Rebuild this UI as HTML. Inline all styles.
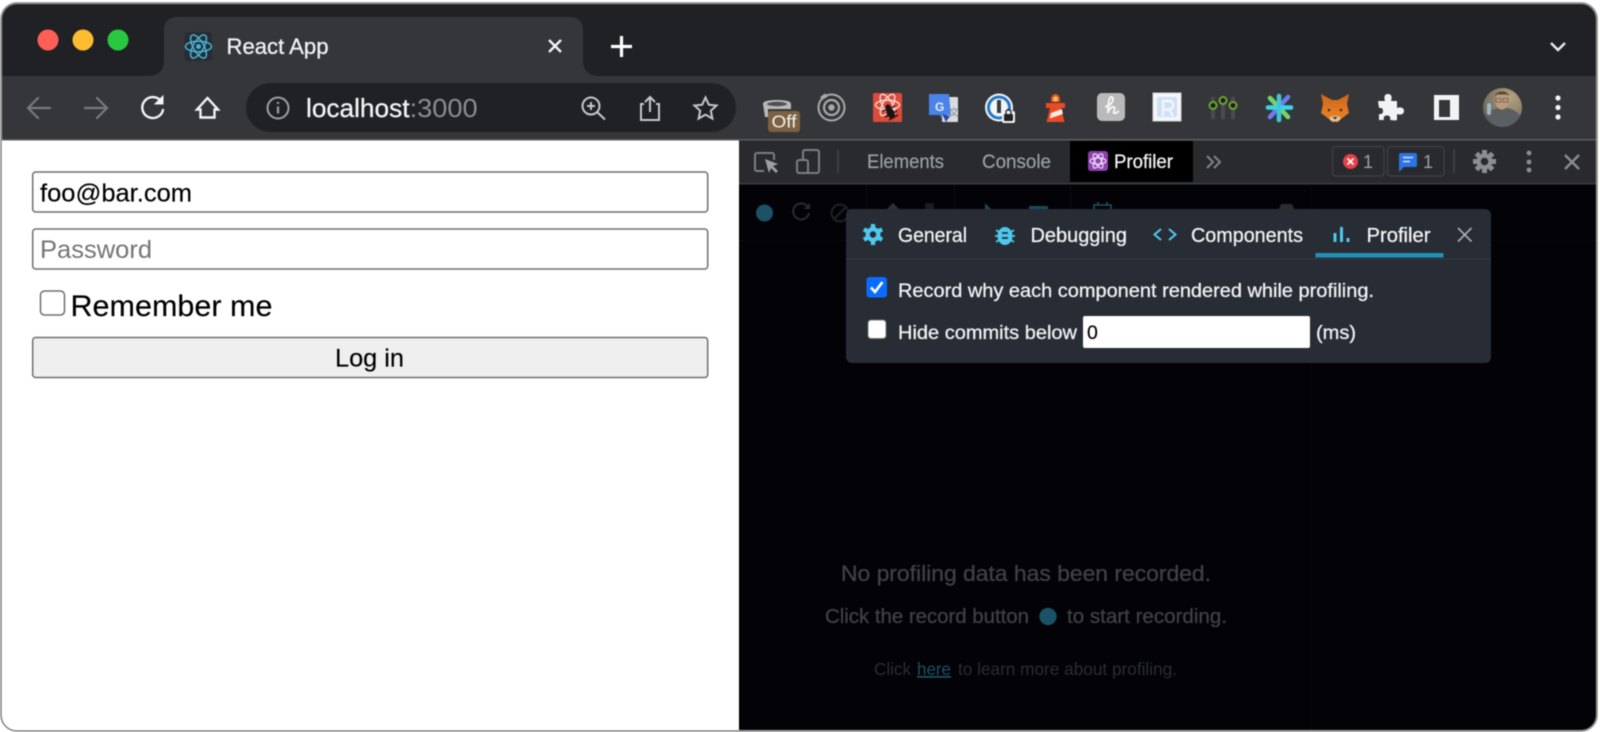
<!DOCTYPE html>
<html lang="en"><head><meta charset="utf-8"><title>React App</title>
<style>
html,body{margin:0;padding:0;background:#fff;width:1600px;height:732px;overflow:hidden}
svg{display:block;position:absolute;left:0;top:0;filter:blur(.4px)}
text{font-family:"Liberation Sans",sans-serif}
.w{stroke:#f0f1f3;stroke-width:.3px}
.k{stroke:#000;stroke-width:.15px}
.g{stroke:#9aa0a6;stroke-width:.2px}
.d{stroke:#404144;stroke-width:.3px}
</style></head><body>
<svg width="1600" height="732" viewBox="0 0 1600 732" xmlns="http://www.w3.org/2000/svg">
<defs>
<clipPath id="win"><rect x="1" y="3" width="1596" height="728" rx="16"/></clipPath>
<radialGradient id="av" cx="70%" cy="25%" r="75%"><stop offset="0" stop-color="#b5a27f"/><stop offset="1" stop-color="#6e6a5c"/></radialGradient>
<linearGradient id="fox" x1="0" y1="0" x2="0" y2="1"><stop offset="0" stop-color="#c9661f"/><stop offset="1" stop-color="#f5851f"/></linearGradient>
</defs>
<rect width="1600" height="732" fill="#fff"/>
<g clip-path="url(#win)">
<rect x="0" y="0" width="1600" height="76" fill="#202124"/>
<rect x="0" y="76" width="1600" height="64" fill="#35363a"/>
<path d="M148 76q16 0 16-16V31q0-14 14-14h391q14 0 14 14v29q0 16 16 16z" fill="#35363a"/>
<circle cx="48" cy="40" r="10.500" fill="#ff5f57"/><circle cx="83" cy="40" r="10.500" fill="#febc2e"/><circle cx="118" cy="40" r="10.500" fill="#28c840"/>
<rect x="184.500" y="32" width="27.500" height="29" rx="3" fill="#282c34"/>
<g fill="none" stroke="#45b5d6" stroke-width="1.500" transform="translate(198.500 46.500)"><ellipse rx="13" ry="5.200"/><ellipse rx="13" ry="5.200" transform="rotate(60)"/><ellipse rx="13" ry="5.200" transform="rotate(120)"/></g><circle cx="198.500" cy="46.500" r="2.500" fill="#45b5d6"/>
<text class="w" x="226.500" y="54" font-size="22" fill="#f0f1f3" textLength="102" lengthAdjust="spacingAndGlyphs">React App</text>
<path d="M549 40l12 12M561 40l-12 12" stroke="#f1f3f4" stroke-width="2.400" fill="none"/>
<path d="M621.500 36v21M611 46.500h21" stroke="#fff" stroke-width="3.200" fill="none"/>
<path d="M1551 43l7 7 7-7" stroke="#e8eaed" stroke-width="2.400" fill="none"/>

<g fill="none" stroke-linecap="round">
<path d="M50 108H29M38 98l-10 10 10 10" stroke="#77797d" stroke-width="2.200"/>
<path d="M85 108h21M97 98l10 10-10 10" stroke="#77797d" stroke-width="2.200"/>
<path d="M161 101a10.500 10.500 0 1 0 2 9" stroke="#f1f3f4" stroke-width="2.400"/>
<path d="M163 96v8h-8z" fill="#f1f3f4" stroke="#f1f3f4" stroke-width="1"/>
</g>
<path d="M197 109.500l10.500-11.500 10.500 11.500h-3.500v8h-14v-8z" stroke="#f1f3f4" stroke-width="2.400" fill="none" stroke-linejoin="miter"/>
<rect x="246" y="83" width="490" height="49" rx="24.500" fill="#202124"/>
<circle cx="278" cy="108" r="10.500" fill="none" stroke="#9aa0a6" stroke-width="2"/>
<path d="M278 106.500v7M278 102v2" stroke="#9aa0a6" stroke-width="2.200"/>
<text class="w" x="306" y="117" font-size="26" fill="#f1f3f4" textLength="103.500" lengthAdjust="spacingAndGlyphs">localhost</text>
<text x="409.600" y="117" font-size="26" fill="#8a8d91" textLength="68" lengthAdjust="spacingAndGlyphs">:3000</text>
<g fill="none" stroke="#c4c7cb" stroke-width="2">
<circle cx="591" cy="106" r="8.500"/><path d="M597 112l8 7.500M591 102v8M587 106h8"/>
<path d="M644 104h-3v16h18v-16h-3M650 112V98M645 102l5-5 5 5" stroke-width="2"/>
<path d="M705.500 97.500l3.300 7.200 7.700.8-5.700 5.300 1.600 7.700-6.900-3.900-6.900 3.900 1.600-7.700-5.700-5.300 7.700-.8z"/>
</g>
<!-- ext: Off -->
<path d="M763 104c0-3 6-4 14-4s14 1 14 4v5h-23v8h-3z" fill="#b9b9b9"/>
<ellipse cx="777" cy="104" rx="10" ry="2.200" fill="#4f5053"/>
<rect x="768" y="111" width="32" height="21" rx="3" fill="#7c6242"/>
<text x="771.500" y="127.500" font-size="17.500" fill="#f1f1f1" textLength="25" lengthAdjust="spacingAndGlyphs">Off</text>
<!-- target -->
<g fill="none" stroke="#a9a9a9"><circle cx="831.500" cy="107.500" r="13" stroke-width="2"/><circle cx="831.500" cy="107.500" r="7.500" stroke-width="2.200"/></g>
<circle cx="831.500" cy="107.500" r="3.200" fill="#a9a9a9"/>
<path d="M820 97l5-3.500 3 3-5 3z" fill="#a9a9a9"/>
<!-- react bug -->
<rect x="873" y="93" width="29" height="29" rx="1.500" fill="#dc4b3b"/>
<g fill="none" stroke="#f6e0da" stroke-width="1.300" transform="translate(887.500 105)"><ellipse rx="12" ry="4.800"/><ellipse rx="12" ry="4.800" transform="rotate(60)"/><ellipse rx="12" ry="4.800" transform="rotate(120)"/></g>
<circle cx="888" cy="107" r="2.600" fill="#1c1210"/>
<ellipse cx="890.500" cy="113" rx="3.800" ry="6" transform="rotate(-28 890.500 113)" fill="#1c1210"/>
<path d="M883 111l12-5M885 117l12-6M889 120l9-5" stroke="#1c1210" stroke-width="1.300"/>
<!-- translate -->
<rect x="942" y="97" width="16" height="25" rx="1" fill="#d9dcdd"/>
<path d="M929 94h20l2 21h-9l-1 3-1-3h-11z" fill="#4a84ea"/>
<path d="M942 114l4 8 4-6z" fill="#2f4aa6"/>
<text x="935" y="111" font-size="12" font-weight="bold" fill="#e7eefb">G</text>
<text x="949" y="116" font-size="10" fill="#7b8d8f" font-family="Noto Sans CJK SC">文</text>
<!-- 1password -->
<circle cx="999" cy="107.500" r="14" fill="#f3f5f7"/><circle cx="999" cy="107.500" r="10.500" fill="none" stroke="#2478c9" stroke-width="3"/>
<rect x="997" y="100" width="4" height="13" fill="#3a3a3a"/>
<rect x="1002" y="111" width="13" height="12" rx="2" fill="#f2f2f2"/><rect x="1004" y="114" width="9" height="7" rx="1" fill="#222"/><path d="M1006 114v-2a2.500 2.500 0 0 1 5 0v2" stroke="#222" stroke-width="1.300" fill="none"/>
<!-- lighthouse -->
<path d="M1051 102v-3a4.500 5 0 0 1 9 0v3z" fill="#eb4a26"/>
<circle cx="1055.500" cy="99" r="2.600" fill="#f5c14b"/>
<rect x="1046" y="103" width="19" height="5" fill="#eb4a26"/>
<path d="M1050 108h11l3.500 14h-18z" fill="#eb4a26"/>
<path d="M1051 113l11-4 .8 5-13 4.500z" fill="#f6ece6"/>
<!-- h -->
<rect x="1097" y="93" width="28" height="28" rx="5" fill="#b9b9b9"/>
<path d="M1105 107c4-1 8-4 8-8 0-2-2-3-3-1-2 3-2 10-2 15 1-4 3-6 5-6 2 0 2 2 1 4s0 3 2 2l3-2" fill="none" stroke="#f6f6f6" stroke-width="1.900"/>
<!-- R -->
<rect x="1153" y="93" width="28" height="28" fill="#f5f6f8" stroke="#cfd2d6"/>
<rect x="1157" y="97" width="20" height="20" rx="2" fill="#cfe0f5"/>
<path d="M1163 116v-15h6a4 4 0 0 1 0 8.500h-6M1169 109.500l4 6.500" fill="none" stroke="#f1f6fc" stroke-width="2.400"/>
<!-- sliders -->
<g fill="#4a4b4e"><rect x="1211" y="97" width="4" height="22"/><rect x="1221" y="97" width="4" height="22"/><rect x="1231" y="97" width="4" height="22"/></g>
<g fill="#1d1d1d" stroke="#6aa82a" stroke-width="2"><circle cx="1213" cy="105.500" r="3.500"/><circle cx="1223" cy="100.500" r="3.500"/><circle cx="1233" cy="105.500" r="3.500"/></g>
<!-- star -->
<g stroke-width="4.600" stroke-linecap="round"><path d="M1270 98l18 19" stroke="#6fd66a"/><path d="M1288 97l-18 20" stroke="#6a7cf0"/><path d="M1268 107.500h23" stroke="#38d6e8"/><path d="M1279 96v24" stroke="#3ec6d6"/></g>
<!-- fox -->
<path d="M1321 94l11 6h6l11-6-2 10 2 9-8 6-3 3h-6l-3-3-8-6 2-9z" fill="url(#fox)"/>
<ellipse cx="1335" cy="118.500" rx="5.500" ry="2.600" fill="#d9c8b4"/><path d="M1332.500 117h5l-2.500 2.500z" fill="#2d2d2d"/>
<circle cx="1329" cy="110" r="1.300" fill="#333"/><circle cx="1341" cy="110" r="1.300" fill="#333"/>
<!-- puzzle -->
<path d="M1378 101h7c-1.500-5 0-7 3-7s4.500 2 3 7h6v7c4-1.500 7 0 7 3s-3 4.500-7 3v6c-1 .5-3 .5-7 0 1-3-.5-4.500-3-4.500s-4 1.500-3 4.500h-5v-6c3 .500 4-1 4-3s-1-3.500-4-3z" fill="#f1f3f4"/>
<!-- panel -->
<rect x="1434" y="95" width="25" height="25" fill="#f1f3f4"/><rect x="1439" y="100" width="11" height="17" fill="#35363a"/>
<!-- avatar -->
<circle cx="1502.500" cy="107.500" r="19.500" fill="url(#av)"/>
<path d="M1484 115c5-5 11-6 14-7h9c5 1 10 3 13 8a19.500 19.500 0 0 1-35 0z" fill="#5a5f61"/>
<ellipse cx="1502" cy="101" rx="6.800" ry="8.500" fill="#bd9a7e"/><path d="M1495 96c1-6 13-6 14 0l-2-1.500h-10z" fill="#5b4632"/>
<g fill="none" stroke="#5f5a52" stroke-width=".7"><rect x="1496" y="98.500" width="5" height="3.500"/><rect x="1503" y="98.500" width="5" height="3.500"/></g>
<rect x="1487" y="103" width="4" height="12" rx="2" fill="#9fb4c8"/>
<g fill="#f1f3f4"><circle cx="1558" cy="98" r="2.600"/><circle cx="1558" cy="107.500" r="2.600"/><circle cx="1558" cy="117" r="2.600"/></g>
<rect x="0" y="139" width="1600" height="1.500" fill="#5c5d60"/>

<!-- page -->
<rect x="0" y="140.500" width="739" height="592" fill="#fff"/>
<g fill="#fff" stroke="#6f6f6f" stroke-width="1.500">
<rect x="32.700" y="172" width="675" height="40" rx="3"/>
<rect x="32.700" y="229" width="675" height="40" rx="3"/>
<rect x="40.500" y="291" width="24" height="24" rx="4"/>
<rect x="32.700" y="337.500" width="675" height="40" rx="3" fill="#efefef"/>
</g>
<text class="k" x="40" y="201.500" font-size="25" fill="#000" textLength="152" lengthAdjust="spacingAndGlyphs">foo@bar.com</text>
<text x="40" y="258" font-size="25" fill="#757575" textLength="112" lengthAdjust="spacingAndGlyphs">Password</text>
<text class="k" x="70.500" y="316" font-size="30" fill="#000" textLength="202" lengthAdjust="spacingAndGlyphs">Remember me</text>
<text class="k" x="335" y="366.500" font-size="25" fill="#000" textLength="69" lengthAdjust="spacingAndGlyphs">Log in</text>

<!-- devtools -->
<rect x="739" y="140.500" width="861" height="592" fill="#020207"/>
<rect x="739" y="140.500" width="861" height="42.500" fill="#292a2d"/>
<rect x="739" y="183" width="861" height="1.500" fill="#3c3d40"/>
<g fill="none" stroke="#7a7d81" stroke-width="2">
<path d="M764 171h-7a2 2 0 0 1-2-2v-14a2 2 0 0 1 2-2h15a2 2 0 0 1 2 2v5"/>
<rect x="803" y="150" width="16" height="23" rx="2"/><rect x="797" y="160" width="11" height="13" rx="2" fill="#292a2d"/>
</g>
<path d="M765 159l13 5-5 2 5 5-2 2-5-5-2 5z" fill="#9aa0a6"/>
<rect x="837.500" y="150" width="1.200" height="23" fill="#4a4b4e"/>
<text class="g" x="867" y="168" font-size="19.500" fill="#9aa0a6" textLength="77" lengthAdjust="spacingAndGlyphs">Elements</text>
<text class="g" x="982" y="168" font-size="19.500" fill="#9aa0a6" textLength="69" lengthAdjust="spacingAndGlyphs">Console</text>
<rect x="1070" y="141" width="123" height="41" fill="#000"/>
<rect x="1088" y="151" width="20" height="20" rx="3" fill="#8e3fb0"/>
<g fill="none" stroke="#e8d2f2" stroke-width="1.300" transform="translate(1098 161)"><ellipse rx="8" ry="3.200"/><ellipse rx="8" ry="3.200" transform="rotate(60)"/><ellipse rx="8" ry="3.200" transform="rotate(120)"/></g>
<text class="w" x="1114" y="168" font-size="19.500" fill="#f0f1f3" textLength="59" lengthAdjust="spacingAndGlyphs">Profiler</text>
<path d="M1207 156l6 6-6 6M1214 156l6 6-6 6" fill="none" stroke="#7f8286" stroke-width="2"/>
<rect x="1332.500" y="146.500" width="51.500" height="29.500" rx="3" fill="none" stroke="#44464a"/>
<circle cx="1350.500" cy="161.500" r="7.500" fill="#e8404a"/><path d="M1347.500 158.500l6 6M1353.500 158.500l-6 6" stroke="#fff" stroke-width="1.600"/>
<text x="1363" y="168" font-size="18" fill="#9aa0a6">1</text>
<rect x="1387.500" y="146.500" width="56.500" height="29.500" rx="3" fill="none" stroke="#44464a"/>
<path d="M1401 153h14a2 2 0 0 1 2 2v10a2 2 0 0 1-2 2h-11l-5 5v-17a2 2 0 0 1 2-2z" fill="#2b74e4"/>
<path d="M1403 157.500h10M1403 161.500h7" stroke="#d3e2f8" stroke-width="1.400"/>
<text x="1423" y="168" font-size="18" fill="#9aa0a6">1</text>
<rect x="1453.500" y="149" width="1.200" height="24" fill="#4a4b4e"/>
<g transform="translate(1484.500 161.500)"><circle r="8" fill="#8a8d91"/><path d="M-2.500-11.500h5v23h-5zM-11.500-2.500h23v5h-23z" fill="#8a8d91"/><path d="M-2.500-11.500h5v23h-5zM-11.500-2.500h23v5h-23z" fill="#8a8d91" transform="rotate(45)"/><circle r="3.800" fill="#292a2d"/></g>
<g fill="#8a8d91"><circle cx="1529" cy="153" r="2.400"/><circle cx="1529" cy="162" r="2.400"/><circle cx="1529" cy="170" r="2.400"/></g>
<path d="M1565 155l14 14M1579 155l-14 14" stroke="#8a8d91" stroke-width="2.400" fill="none"/>

<!-- dim profiler toolbar -->
<rect x="739" y="240" width="861" height="1" fill="#0a0b0e"/>
<rect x="1311" y="184" width="1" height="548" fill="#0a0b0e"/>
<circle cx="764.500" cy="213" r="8.500" fill="#1b5266"/>
<path d="M807 206a8 8 0 1 0 2 7" fill="none" stroke="#2b2c2f" stroke-width="2"/>
<path d="M810 203v6h-6z" fill="#2b2c2f"/>
<circle cx="840" cy="213" r="8.500" fill="none" stroke="#202125" stroke-width="2"/><path d="M834 219l12-12" stroke="#202125" stroke-width="2"/>
<g fill="#0d0e12"><rect x="866" y="186" width="1" height="23"/><rect x="954" y="186" width="1" height="23"/><rect x="1070" y="186" width="1" height="23"/></g>
<path d="M887 209l6-6 6 6z" fill="#2f3033"/><rect x="925" y="203" width="9" height="6" fill="#1b1c1f"/>
<path d="M985 203l6 6h-6z" fill="#1a4a5a"/><rect x="1029" y="206" width="19" height="3" fill="#1a4a5a"/>
<path d="M1094 209v-4h17v4M1098 205v-3M1107 205v-3" fill="none" stroke="#1a4a5a" stroke-width="1.800"/>
<path d="M1279 209l2-5h11l2 5z" fill="#2b2c2f"/>

<!-- empty state -->
<text class="d" x="841" y="581" font-size="22.500" fill="#404144" textLength="370" lengthAdjust="spacingAndGlyphs">No profiling data has been recorded.</text>
<text class="d" x="825" y="623" font-size="20" fill="#404144" textLength="204" lengthAdjust="spacingAndGlyphs">Click the record button</text>
<circle cx="1048" cy="616.500" r="8.700" fill="#1b5266"/>
<text class="d" x="1067" y="623" font-size="20" fill="#404144" textLength="160" lengthAdjust="spacingAndGlyphs">to start recording.</text>
<text x="874" y="675" font-size="17.500" fill="#2b2d31" textLength="37" lengthAdjust="spacingAndGlyphs">Click</text>
<text x="917" y="675" font-size="17.500" fill="#1b5264" text-decoration="underline" textLength="34" lengthAdjust="spacingAndGlyphs">here</text>
<text x="958" y="675" font-size="17.500" fill="#2b2d31" textLength="219" lengthAdjust="spacingAndGlyphs">to learn more about profiling.</text>

<!-- popup -->
<rect x="846" y="209" width="645" height="154" rx="6" fill="#282c34"/>
<rect x="846" y="258.500" width="645" height="1" fill="#34383f"/>
<g transform="translate(873 234.500)"><circle r="7.500" fill="#4dc9f0"/><path d="M-2.200-10.500h4.400v21h-4.400z" fill="#4dc9f0"/><path d="M-2.200-10.500h4.400v21h-4.400z" fill="#4dc9f0" transform="rotate(60)"/><path d="M-2.200-10.500h4.400v21h-4.400z" fill="#4dc9f0" transform="rotate(120)"/><circle r="3.200" fill="#282c34"/></g>
<ellipse cx="1005" cy="236" rx="7.500" ry="9" fill="#4dc9f0"/>
<path d="M996 230l3 2M1014 230l-3 2M995 236h4M1015 236h-4M996 242l3-2M1014 242l-3-2" stroke="#4dc9f0" stroke-width="1.700"/>
<path d="M1002 233h6M1002 238h6" stroke="#282c34" stroke-width="1.700"/>
<text class="w" x="898" y="242" font-size="20" fill="#f0f1f3" textLength="69" lengthAdjust="spacingAndGlyphs">General</text>
<text class="w" x="1030.500" y="242" font-size="20" fill="#f0f1f3" textLength="96.500" lengthAdjust="spacingAndGlyphs">Debugging</text>
<path d="M1161 229l-6.500 5.500 6.500 5.500M1169 229l6.500 5.500-6.500 5.500" fill="none" stroke="#4dc9f0" stroke-width="2"/>
<text class="w" x="1191" y="242" font-size="20" fill="#f0f1f3" textLength="112" lengthAdjust="spacingAndGlyphs">Components</text>
<path d="M1335 233v9M1341.500 227v15M1348 238v4" stroke="#4dc9f0" stroke-width="3"/>
<text class="w" x="1366.500" y="242" font-size="20" fill="#f0f1f3" textLength="64" lengthAdjust="spacingAndGlyphs">Profiler</text>
<rect x="1315.500" y="253" width="128" height="4.500" fill="#2191b5"/>
<path d="M1458 228l13.500 13.500M1471.500 228l-13.500 13.500" stroke="#a5a8ad" stroke-width="1.800" fill="none"/>
<rect x="866.500" y="277" width="20.500" height="20.500" rx="3" fill="#0a6cff"/>
<path d="M871 287.500l4 4.500 7.500-10" fill="none" stroke="#fff" stroke-width="2.600"/>
<text class="w" x="898" y="297" font-size="19.500" fill="#f0f1f3" textLength="476" lengthAdjust="spacingAndGlyphs">Record why each component rendered while profiling.</text>
<rect x="868" y="320" width="18" height="18.500" rx="3" fill="#fff" stroke="#767676"/>
<text class="w" x="898" y="339" font-size="19.500" fill="#f0f1f3" textLength="179" lengthAdjust="spacingAndGlyphs">Hide commits below</text>
<rect x="1083" y="316" width="227" height="32" rx="2" fill="#fff"/>
<text class="k" x="1087" y="339" font-size="19.500" fill="#000">0</text>
<text class="w" x="1316" y="339" font-size="19.500" fill="#f0f1f3" textLength="40" lengthAdjust="spacingAndGlyphs">(ms)</text>
</g>
<rect x="1" y="3" width="1596" height="728" rx="16" fill="none" stroke="#d6d6d6" stroke-width="2"/>
<rect x="1" y="3" width="1596" height="728" rx="16" fill="none" stroke="#6c6c6c" stroke-width="1"/>
</svg>
</body></html>
